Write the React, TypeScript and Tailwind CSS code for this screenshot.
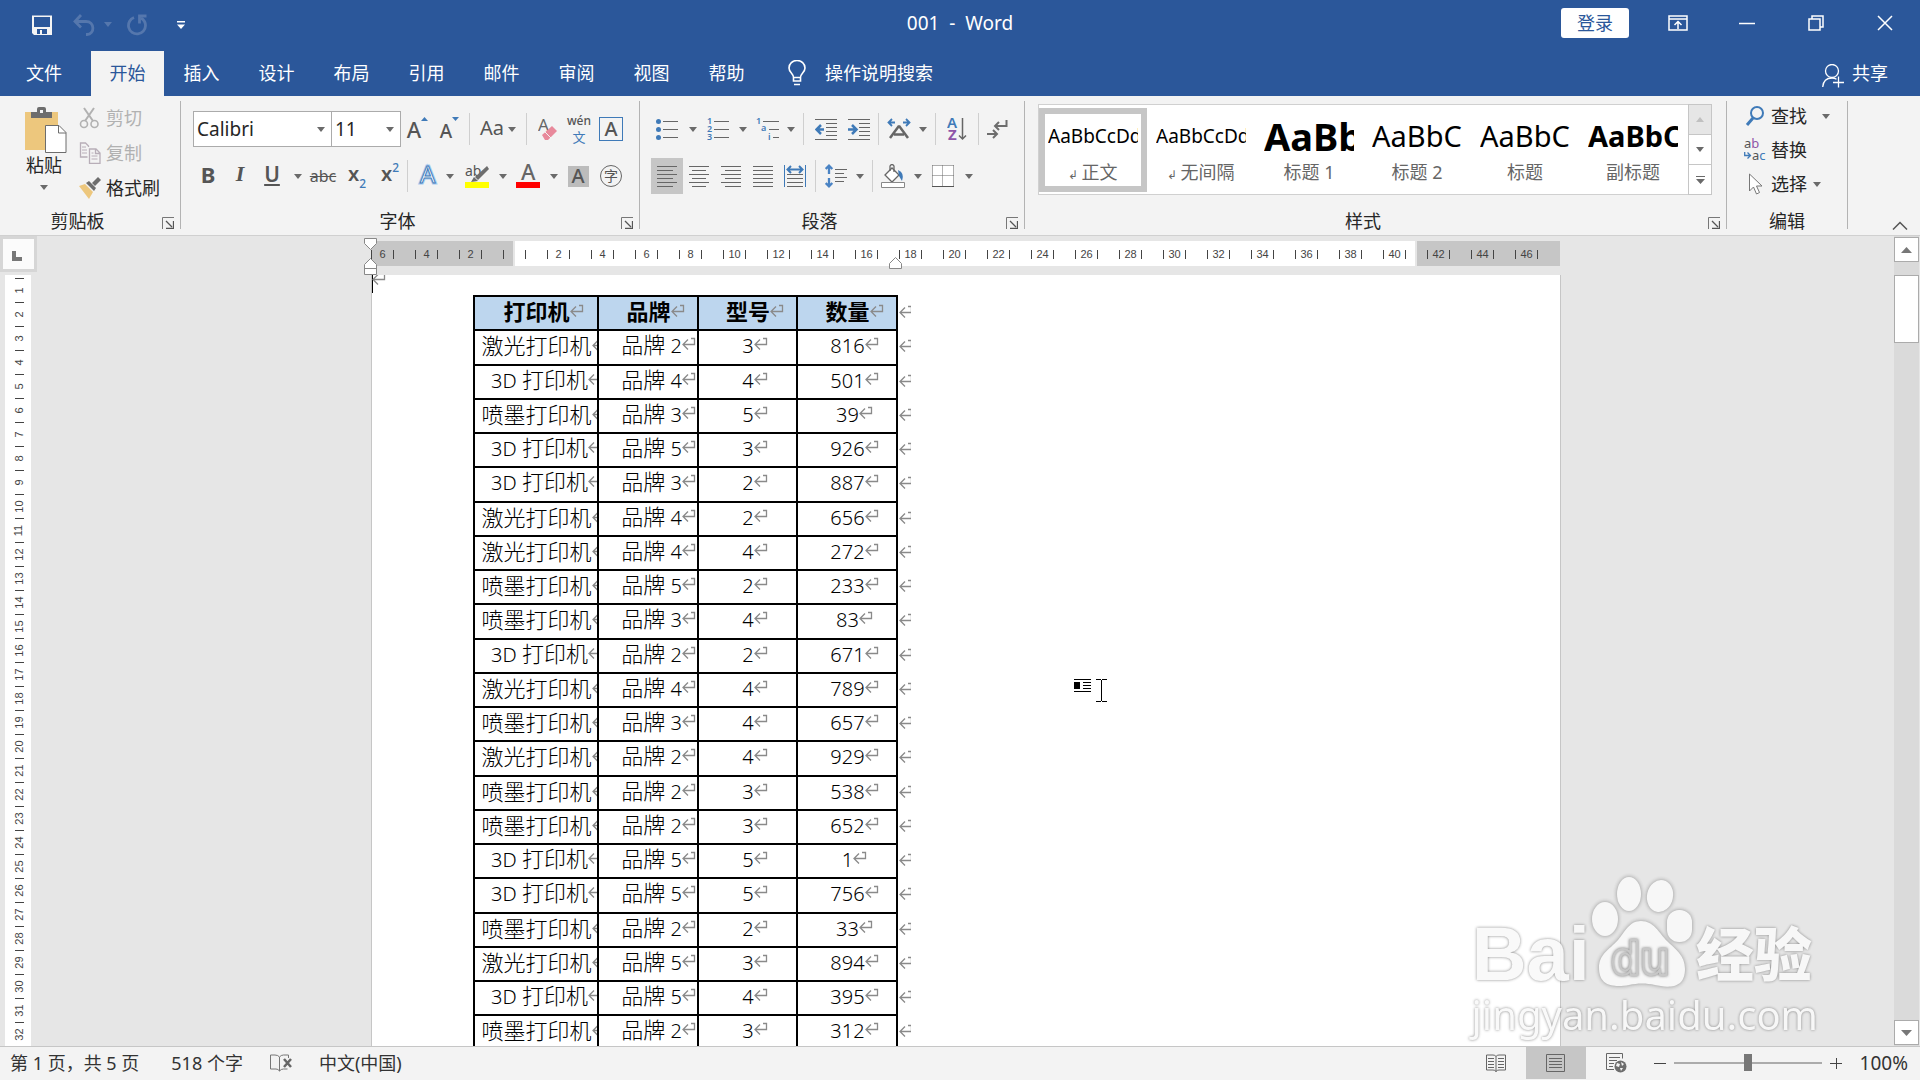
import type { ReactNode } from 'react';

const printers: [string, string, string, string][] = [
  ['激光打印机', '品牌 2', '3', '816'],
  ['3D 打印机', '品牌 4', '4', '501'],
  ['喷墨打印机', '品牌 3', '5', '39'],
  ['3D 打印机', '品牌 5', '3', '926'],
  ['3D 打印机', '品牌 3', '2', '887'],
  ['激光打印机', '品牌 4', '2', '656'],
  ['激光打印机', '品牌 4', '4', '272'],
  ['喷墨打印机', '品牌 5', '2', '233'],
  ['喷墨打印机', '品牌 3', '4', '83'],
  ['3D 打印机', '品牌 2', '2', '671'],
  ['激光打印机', '品牌 4', '4', '789'],
  ['喷墨打印机', '品牌 3', '4', '657'],
  ['激光打印机', '品牌 2', '4', '929'],
  ['喷墨打印机', '品牌 2', '3', '538'],
  ['喷墨打印机', '品牌 2', '3', '652'],
  ['3D 打印机', '品牌 5', '5', '1'],
  ['3D 打印机', '品牌 5', '5', '756'],
  ['喷墨打印机', '品牌 2', '2', '33'],
  ['激光打印机', '品牌 5', '3', '894'],
  ['3D 打印机', '品牌 5', '4', '395'],
  ['喷墨打印机', '品牌 2', '3', '312'],
];

const tabs = ['插入', '设计', '布局', '引用', '邮件', '审阅', '视图', '帮助'];

const styleItems = [
  { name: '正文', mark: true, sample: 'AaBbCcDd', font: 'text-[19px]', active: true },
  { name: '无间隔', mark: true, sample: 'AaBbCcDd', font: 'text-[19px]', active: false },
  { name: '标题 1', mark: false, sample: 'AaBb', font: 'text-[38px] font-bold', active: false },
  { name: '标题 2', mark: false, sample: 'AaBbC', font: 'text-[29px]', active: false },
  { name: '标题', mark: false, sample: 'AaBbC', font: 'text-[29px]', active: false },
  { name: '副标题', mark: false, sample: 'AaBbC', font: 'text-[29px] font-bold', active: false },
];

const rulerCells = Array.from({ length: 54 }, (_, i) => i - 6);
const sideCells = Array.from({ length: 32 }, (_, i) => i + 1);

function Icon({ w, h, children }: { w: number; h: number; children: ReactNode }) {
  return (
    <svg width={w} height={h} viewBox={`0 0 ${w} ${h}`} fill="none" className="shrink-0" aria-hidden="true">
      {children}
    </svg>
  );
}

function Caret() {
  return (
    <Icon w={8} h={5}>
      <path d="M0 0h8L4 5z" fill="#6a6a6a" />
    </Icon>
  );
}

function Tool({ label, className, children }: { label: string; className: string; children: ReactNode }) {
  return (
    <button aria-label={label} className={`flex h-9 shrink-0 items-center justify-center text-[#555] ${className}`}>
      {children}
    </button>
  );
}

function Sep() {
  return <div className="mx-1 h-8 w-px shrink-0 bg-[#cfcfcf]" />;
}

function Group({ title, className, launcher = true, children }: { title: string; className: string; launcher?: boolean; children: ReactNode }) {
  return (
    <>
      <section aria-label={title} className={`flex flex-col ${className}`}>
        {children}
        <div className="mt-auto flex h-7 items-center text-[#262626]">
          <span className="flex-1 text-center leading-7">{title}</span>
          {launcher && (
            <button aria-label={`${title}设置`} className="flex h-7 w-[25px] items-center justify-center pt-1">
              <Icon w={12} h={12}>
                <path d="M.5 12V.5H12" stroke="#777" />
                <path d="M4 4l6 6M11.500 4v7.500H4" stroke="#555" strokeWidth="1.300" />
              </Icon>
            </button>
          )}
        </div>
      </section>
      <div className="mt-[5px] mb-1.5 w-px shrink-0 bg-[#b3b3b3]" />
    </>
  );
}

function Lines({ rows }: { rows: [number, number][] }) {
  return (
    <Icon w={20} h={22}>
      {rows.map(([x, len], i) => (
        <path key={i} d={`M${x} ${i * 4 + 1.5}h${len}`} stroke="#666" />
      ))}
      <path d={`M${rows[1][0]} 21.500h${rows[1][1]}`} stroke="#666" />
    </Icon>
  );
}

function TitleBar() {
  return (
    <header className="grid h-[51px] shrink-0 grid-cols-[1fr_auto_1fr] bg-[#2b579a] text-white">
      <div className="flex items-center pb-0.5 pl-7">
        <button aria-label="保存" className="flex w-7 justify-center">
          <Icon w={20} h={20}>
            <path d="M0 .5h20V20H2L0 18z" fill="#f4f4f4" />
            <path d="M2 2h16v10H2zM5 14h10v5H5z" fill="#2b579a" />
            <path d="M8 15h2v4H8z" fill="#f4f4f4" />
          </Icon>
        </button>
        <button aria-label="撤消" className="ml-2.5 flex w-9 justify-center">
          <Icon w={22} h={22}>
            <path d="M8 1L2 7.500l6 6M2 7.500h11c9 0 9 13 1 13h-1" stroke="#5577ad" strokeWidth="2.800" />
          </Icon>
        </button>
        <button aria-label="撤消选项" className="flex w-3 justify-center">
          <Icon w={8} h={5}><path d="M0 0h8L4 5z" fill="#5577ad" /></Icon>
        </button>
        <button aria-label="重复" className="flex w-[46px] justify-center">
          <Icon w={20} h={22}>
            <path d="M7 3.500A8.500 8.500 0 1 0 18.500 11.500c0-3-1.500-5.500-4.500-7.500" stroke="#5577ad" strokeWidth="2.800" />
            <path d="M12.500 9.500V2h7" stroke="#5577ad" strokeWidth="2.800" />
          </Icon>
        </button>
        <button aria-label="自定义快速访问工具栏" className="flex w-[42px] justify-center">
          <Icon w={8} h={8}><path d="M0 0h8v1.500H0zM0 3.500h8L4 8z" fill="#fff" /></Icon>
        </button>
      </div>
      <h1 className="self-center pb-1.5 text-[19px] whitespace-pre">001  -  Word</h1>
      <div className="flex items-center justify-end pr-px pb-[5px]">
        <button className="mr-[14px] h-[30px] w-[68px] rounded-[3px] bg-white text-[#2b579a]">登录</button>
        <button aria-label="功能区显示选项" className="flex w-[69px] justify-center">
          <Icon w={20} h={16}>
            <path d="M1 1h18v14H1zM1 4h18" stroke="#fff" strokeWidth="1.500" />
            <path d="M10 14V7M6.500 10L10 6.500l3.500 3.500" stroke="#fff" strokeWidth="1.500" />
          </Icon>
        </button>
        <button aria-label="最小化" className="flex w-[69px] justify-center">
          <Icon w={16} h={16}><path d="M0 8.500h16" stroke="#fff" strokeWidth="1.500" /></Icon>
        </button>
        <button aria-label="还原" className="flex w-[69px] justify-center">
          <Icon w={16} h={16}>
            <path d="M1 4h11v11H1zM4 4V1h11v11h-3" stroke="#fff" strokeWidth="1.500" />
          </Icon>
        </button>
        <button aria-label="关闭" className="flex w-[69px] justify-center">
          <Icon w={16} h={16}><path d="M1 1l14 14M15 1L1 15" stroke="#fff" strokeWidth="1.500" /></Icon>
        </button>
      </div>
    </header>
  );
}

function TabBar() {
  return (
    <nav className="flex h-[45px] shrink-0 items-stretch bg-[#2b579a] text-white">
      <button className="w-[91px] pr-[3px] pb-0.5">文件</button>
      <button className="w-[73px] bg-[#f3f3f3] pb-0.5 text-[#2b579a]">开始</button>
      {tabs.map((tab) => (
        <button key={tab} className="w-[75px] pb-0.5">{tab}</button>
      ))}
      <button className="ml-6 flex items-center gap-[19px] pb-0.5">
        <Icon w={18} h={26}>
          <path d="M5.500 17.500c0-4-4.500-5-4.500-9.500a8 7.500 0 0 1 16 0c0 4.500-4.500 5.500-4.500 9.500zM5.500 18v3h7v-3M6 24.500h6" stroke="#fff" strokeWidth="1.600" />
        </Icon>
        操作说明搜索
      </button>
      <button className="mr-8 ml-auto flex items-center gap-2 pb-0.5">
        <span className="pt-1.5">
          <Icon w={22} h={24}>
            <ellipse cx="10" cy="7" rx="6.500" ry="6.500" stroke="#fff" strokeWidth="1.300" />
            <path d="M.7 23c.5-6 4-9 9.300-9 2 0 3.500.5 4.500 1.200M16.500 12.500v11M11 18.500h11" stroke="#fff" strokeWidth="1.300" />
          </Icon>
        </span>
        共享
      </button>
    </nav>
  );
}

function ClipboardGroup() {
  return (
    <Group title="剪贴板" className="w-[180px] shrink-0">
      <div className="flex">
        <button className="mt-[11px] ml-[21px] flex w-12 flex-col items-center pr-0.5 text-[#262626]">
          <span className="pl-1">
            <Icon w={42} h={46}>
              <path d="M0 5h33v38H0z" fill="#edc77d" />
              <path d="M6 5h6V2q0-2 2-2h5q2 0 2 2v3h6v6H6z" fill="#6d6d6d" />
              <path d="M15 3h3v3h-3z" fill="#f3f3f3" />
              <path d="M20.500 18.500H34l7 7v20H20.500z" fill="#fff" stroke="#6d6d6d" />
              <path d="M33.500 18.500v7.500H41" stroke="#6d6d6d" />
            </Icon>
          </span>
          <span className="leading-6">粘贴</span>
          <span className="mt-2"><Caret /></span>
        </button>
        <div className="flex flex-col pt-1 pl-2.5">
          <button disabled className="flex h-[35px] items-center gap-[5px] text-[#b1b1b1]">
            <Icon w={22} h={22}>
              <path d="M5 1l9 13M15 1L6 14" stroke="#b1b1b1" strokeWidth="2" />
              <circle cx="5" cy="17" r="3.500" stroke="#b1b1b1" strokeWidth="1.600" />
              <circle cx="15.500" cy="17" r="3.500" stroke="#b1b1b1" strokeWidth="1.600" />
            </Icon>
            剪切
          </button>
          <button disabled className="flex h-[35px] items-center gap-[5px] text-[#b1b1b1]">
            <Icon w={22} h={22}>
              <path d="M9.500 5V4l-3-3H1.500v14h7" stroke="#b8aeb8" strokeWidth="1.300" />
              <path d="M10.500 7H17l4 4v10.500H10.500zM16.500 7v4.500H21" stroke="#b8aeb8" strokeWidth="1.300" />
              <path d="M3 5h4M3 8h5M3 11h5M12.500 14h6M12.500 17h6M12.500 11h2" stroke="#b8aeb8" />
            </Icon>
            复制
          </button>
          <button className="flex h-[35px] items-center gap-[5px] text-[#262626]">
            <Icon w={22} h={22}>
              <path d="M0 9l6-2 8 8-4 7z" fill="#edc77d" />
              <path d="M7 6l3-2 7 7-2 3z" fill="#6d6d6d" />
              <path d="M13 6l6-6 3 3-6 6z" fill="#6d6d6d" />
            </Icon>
            格式刷
          </button>
        </div>
      </div>
    </Group>
  );
}

function FontGroup() {
  return (
    <Group title="字体" className="w-[458px] shrink-0 pt-[15px]">
      <div className="flex h-9 items-center pl-3">
        <label className="flex h-9 w-[139px] items-center border border-[#ababab] bg-white pr-1.5">
          <select aria-label="字体" className="w-full appearance-none pl-[3px] text-[19px] leading-8 text-[#262626] outline-none">
            <option>Calibri</option>
          </select>
          <Caret />
        </label>
        <label className="flex h-9 w-[69px] items-center border border-l-0 border-[#ababab] bg-white pr-1.5">
          <select aria-label="字号" className="w-full appearance-none pl-[3px] text-[19px] leading-8 text-[#262626] outline-none">
            <option>11</option>
          </select>
          <Caret />
        </label>
        <Tool label="增大字号" className="w-8 pl-px">
          <span className="text-[22px] leading-9 font-medium">A</span>
          <span className="mb-5"><Icon w={7} h={4}><path d="M0 4h7L3.500 0z" fill="#3f7ab8" /></Icon></span>
        </Tool>
        <Tool label="减小字号" className="w-8 pl-px">
          <span className="pt-1 text-[19px] leading-8 font-medium">A</span>
          <span className="mb-5"><Icon w={7} h={4}><path d="M0 0h7L3.500 4z" fill="#3f7ab8" /></Icon></span>
        </Tool>
        <Sep />
        <Tool label="更改大小写" className="w-12 gap-1"><span className="pb-0.5 text-xl leading-8">Aa</span><Caret /></Tool>
        <Sep />
        <Tool label="清除所有格式" className="w-[34px]">
          <Icon w={20} h={24}>
            <text x="0" y="14" fontSize="17" fill="#666">A</text>
            <path d="M4 18l10-9 5 5-9 9H7z" fill="#e8899b" />
            <path d="M7 15l6 6" stroke="#f3f3f3" />
          </Icon>
        </Tool>
        <Tool label="拼音指南" className="w-7 flex-col">
          <span className="text-xs leading-4 font-medium">wén</span>
          <span className="text-[13px] leading-4 text-[#3f7ab8]">文</span>
        </Tool>
        <Tool label="字符边框" className="w-9">
          <span className="flex size-6 items-center justify-center border border-[#3f7ab8] text-xl leading-6 font-medium">A</span>
        </Tool>
      </div>
      <div className="mt-[11px] flex h-9 items-center pl-3">
        <Tool label="加粗" className="w-[30px] pb-1 text-[22px] font-bold">B</Tool>
        <Tool label="倾斜" className="w-[34px] pb-1 font-['Liberation_Serif',serif] text-[22px] font-bold italic">I</Tool>
        <Tool label="下划线" className="w-[30px] pb-1 text-[21px] font-semibold underline underline-offset-2">U</Tool>
        <Tool label="下划线选项" className="w-[22px]"><Caret /></Tool>
        <Tool label="删除线" className="w-7 text-base line-through">abc</Tool>
        <Tool label="下标" className="w-10 text-xl font-semibold">
          <span className="pb-1">x</span><span className="mt-4 text-xs font-medium text-[#3f7ab8]">2</span>
        </Tool>
        <Tool label="上标" className="w-[26px] text-xl font-semibold">
          <span className="pb-1">x</span><span className="mb-4 text-xs font-medium text-[#3f7ab8]">2</span>
        </Tool>
        <Sep />
        <Tool label="文本效果和版式" className="w-8">
          <Icon w={24} h={28}>
            <text x="4" y="21" fontSize="24" fill="#fff" stroke="#a9cbef" strokeWidth="3">A</text>
            <text x="4" y="21" fontSize="24" fill="#fff" stroke="#3f7ab8" strokeWidth="1">A</text>
          </Icon>
        </Tool>
        <Tool label="文本效果选项" className="w-3"><Caret /></Tool>
        <Tool label="突出显示" className="w-[42px]">
          <Icon w={24} h={24}>
            <text x="0" y="12" fontSize="14" fill="#555">ab</text>
            <path d="M22 2l2 3-11 11-3-3z" fill="#6d6d6d" />
            <path d="M9 13l4 4-7 1z" fill="#6d6d6d" />
            <path d="M0 18h24v6H0z" fill="#ff0" />
          </Icon>
        </Tool>
        <Tool label="突出显示颜色" className="w-2.5"><Caret /></Tool>
        <Tool label="字体颜色" className="w-10">
          <Icon w={24} h={28}>
            <text x="5" y="18" fontSize="22" fontWeight="500" fill="#666">A</text>
            <path d="M0 20h24v6H0z" fill="red" />
          </Icon>
        </Tool>
        <Tool label="字体颜色选项" className="w-3"><Caret /></Tool>
        <Tool label="字符底纹" className="w-9">
          <span className="flex size-[21px] items-center justify-center bg-[#bcbcbc] text-xl leading-5 font-medium">A</span>
        </Tool>
        <Tool label="带圈字符" className="w-[30px]">
          <span className="flex size-[22px] items-center justify-center rounded-full border border-[#666] text-sm leading-4">字</span>
        </Tool>
      </div>
    </Group>
  );
}

function ParagraphGroup() {
  return (
    <Group title="段落" className="w-[384px] shrink-0 pt-[15px]">
      <div className="flex h-9 items-center pl-[9px]">
        <Tool label="项目符号" className="w-9">
          <Icon w={22} h={22}>
            <path d="M7 3.500h15M7 11.500h15M7 19.500h15" stroke="#666" />
            <circle cx="2.500" cy="3.500" r="2.500" fill="#3f7ab8" />
            <circle cx="2.500" cy="11.500" r="2.500" fill="#3f7ab8" />
            <circle cx="2.500" cy="19.500" r="2.500" fill="#3f7ab8" />
          </Icon>
        </Tool>
        <Tool label="项目符号选项" className="w-4"><Caret /></Tool>
        <Tool label="编号" className="w-[34px]">
          <Icon w={22} h={24}>
            <path d="M7 4.500h15M7 12.500h15M7 20.500h15" stroke="#666" />
            <text fontSize="9" fontWeight="600" fill="#3f7ab8">
              <tspan x="0" y="7">1</tspan>
              <tspan x="0" y="15">2</tspan>
              <tspan x="0" y="23">3</tspan>
            </text>
          </Icon>
        </Tool>
        <Tool label="编号选项" className="w-4"><Caret /></Tool>
        <Tool label="多级列表" className="w-8">
          <Icon w={23} h={24}>
            <path d="M7 4.500h16M13 12.500h10M17 20.500h6" stroke="#666" />
            <text fontSize="9" fontWeight="600" fill="#3f7ab8">
              <tspan x="0" y="7">1</tspan>
              <tspan x="5" y="14">a</tspan>
              <tspan x="12" y="23">i</tspan>
            </text>
          </Icon>
        </Tool>
        <Tool label="多级列表选项" className="w-4"><Caret /></Tool>
        <Sep />
        <Tool label="减少缩进量" className="w-9">
          <Icon w={22} h={22}>
            <path d="M0 1.500h22M11 5.500h11M11 9.500h11M11 13.500h11M11 17.500h11M0 21.500h22" stroke="#666" />
            <path d="M9 11.500H2M6 7l-4.500 4.500L6 16" stroke="#3f7ab8" strokeWidth="2.500" />
          </Icon>
        </Tool>
        <Tool label="增加缩进量" className="w-[30px]">
          <Icon w={22} h={22}>
            <path d="M0 1.500h22M11 5.500h11M11 9.500h11M11 13.500h11M11 17.500h11M0 21.500h22" stroke="#666" />
            <path d="M0 11.500h7M4 7l4.500 4.500L4 16" stroke="#3f7ab8" strokeWidth="2.500" />
          </Icon>
        </Tool>
        <Sep />
        <Tool label="中文版式" className="w-8">
          <Icon w={24} h={22}>
            <path d="M8 4.500H2M5 1L1.500 4.500 5 8M16 4.500h6M19 1l3.500 3.500L19 8" stroke="#3f7ab8" strokeWidth="1.800" />
            <path d="M3 20L11.500 8.500h1L21 20M7 16.500h10" stroke="#666" strokeWidth="2.500" />
          </Icon>
        </Tool>
        <Tool label="中文版式选项" className="w-4"><Caret /></Tool>
        <Sep />
        <Tool label="排序" className="w-[34px]">
          <Icon w={20} h={26}>
            <text x="0" y="12" fontSize="15" fontWeight="600" fill="#3f7ab8">A</text>
            <text x="1" y="24" fontSize="15" fontWeight="700" fill="#8e55a8">Z</text>
            <path d="M15.500 2v21M12 19.500l3.500 3.500 3.500-3.500" stroke="#666" strokeWidth="1.500" />
          </Icon>
        </Tool>
        <Sep />
        <Tool label="显示编辑标记" className="w-7">
          <Icon w={22} h={22}>
            <path d="M20.500 2v6H9M13 4L9 8l4 4" stroke="#6d6d6d" strokeWidth="2" />
            <path d="M1 16h10M7 12l4 4-4 4" stroke="#6d6d6d" strokeWidth="2" />
          </Icon>
        </Tool>
      </div>
      <div className="mt-[11px] flex h-9 items-center pl-[11px]">
        <Tool label="左对齐" className="w-8 bg-[#c6c6c6]"><Lines rows={[[0, 20], [0, 16], [0, 20], [0, 16], [0, 20]]} /></Tool>
        <Tool label="居中" className="w-8"><Lines rows={[[0, 20], [3, 14], [0, 20], [3, 14], [0, 20]]} /></Tool>
        <Tool label="右对齐" className="w-8"><Lines rows={[[0, 20], [4, 16], [0, 20], [4, 16], [0, 20]]} /></Tool>
        <Tool label="两端对齐" className="w-8"><Lines rows={[[0, 20], [0, 20], [0, 20], [0, 20], [0, 20]]} /></Tool>
        <Tool label="分散对齐" className="w-8">
          <Icon w={22} h={22}>
            <path d="M.5 0v22M21.500 0v22" stroke="#3f7ab8" />
            <path d="M4 4.500h14M7 1L3.500 4.500 7 8M15 1l3.500 3.500L15 8" stroke="#3f7ab8" strokeWidth="2" />
            <path d="M3 9.500h16M3 13.500h16M3 17.500h16M3 21.500h16" stroke="#666" />
          </Icon>
        </Tool>
        <Sep />
        <Tool label="行和段落间距" className="w-8">
          <Icon w={22} h={24}>
            <path d="M4 2v8M.7 5L4 1.700 7.300 5M4 14v8M.7 19L4 22.300 7.300 19" stroke="#4a83c4" strokeWidth="2.300" />
            <path d="M10 5.500h12M10 9.500h9M10 13.500h12M10 17.500h9" stroke="#666" />
          </Icon>
        </Tool>
        <Tool label="行距选项" className="w-4"><Caret /></Tool>
        <Sep />
        <Tool label="底纹" className="w-8">
          <Icon w={24} h={24}>
            <path d="M4 11l7-7 7 7-7 7z" fill="#fff" stroke="#666" strokeWidth="1.300" />
            <path d="M9 7V2q2-3 4 0v6" stroke="#666" strokeWidth="1.300" />
            <path d="M17 6q7 3 4 11l-3-5z" fill="#3f7ab8" />
            <path d="M.5 18.500h23v5H.5z" fill="#fff" stroke="#888" />
          </Icon>
        </Tool>
        <Tool label="底纹选项" className="w-[18px]"><Caret /></Tool>
        <Tool label="边框" className="w-8">
          <Icon w={22} h={22}>
            <path d="M1 1h20v20H1z" fill="#fff" />
            <path d="M.5 .5h21M.5 10.500h21M.5 .5v21M10.500 .5v21M21.500 .5v21" stroke="#666" strokeDasharray="1 1" />
            <path d="M0 21.500h22" stroke="#555" />
          </Icon>
        </Tool>
        <Tool label="边框选项" className="w-5"><Caret /></Tool>
      </div>
    </Group>
  );
}

function StylesGroup() {
  return (
    <Group title="样式" className="max-w-[701px] min-w-0 flex-1">
      <div className="mt-2 mr-[14px] ml-[13px] flex h-[91px]">
        <div className="flex min-w-0 flex-1 items-center overflow-hidden border border-r-0 border-[#d0d0d0] bg-white">
          {styleItems.map((item) => (
            <button
              key={item.name}
              className={`flex h-[84px] w-[108px] shrink-0 flex-col border-[6px] px-[3px] ${item.active ? 'border-[#c6c6c6]' : 'border-transparent'}`}
            >
              <span className={`flex h-11 w-full items-center overflow-hidden leading-[44px] text-black ${item.font}`}>{item.sample}</span>
              <span className="w-full text-center leading-7 whitespace-nowrap text-[#666]">
                {item.mark && <span className="text-xs">↲ </span>}
                {item.name}
              </span>
            </button>
          ))}
        </div>
        <div className="flex w-6 flex-col divide-y divide-[#c6c6c6] border border-[#c6c6c6] bg-white">
          <button aria-label="上一行" disabled className="flex flex-1 items-center justify-center bg-[#e6e6e6]">
            <Icon w={8} h={5}><path d="M0 5h8L4 0z" fill="#c0c0c0" /></Icon>
          </button>
          <button aria-label="下一行" className="flex flex-1 items-center justify-center">
            <Icon w={8} h={5}><path d="M0 0h8L4 5z" fill="#6a6a6a" /></Icon>
          </button>
          <button aria-label="其他样式" className="flex flex-1 items-center justify-center">
            <Icon w={9} h={8}><path d="M0 0h9v1H0zM0 3h9L4.500 8z" fill="#6a6a6a" /></Icon>
          </button>
        </div>
      </div>
    </Group>
  );
}

function EditingGroup() {
  return (
    <Group title="编辑" className="w-[120px] shrink-0" launcher={false}>
      <div className="flex flex-col pt-[3px] pl-[17px] text-[#262626]">
        <button className="flex h-[34px] items-center gap-[5px]">
          <Icon w={22} h={22}>
            <circle cx="13" cy="8" r="6" stroke="#3f7ab8" strokeWidth="2" />
            <path d="M9 13l-6 7" stroke="#3f7ab8" strokeWidth="3" />
          </Icon>
          查找
          <span className="ml-2.5"><Caret /></span>
        </button>
        <button className="flex h-[34px] items-center gap-[5px]">
          <Icon w={22} h={24}>
            <text x="0" y="10" fontSize="13" fill="#555">a<tspan fill="#8e55a8">b</tspan></text>
            <text x="8" y="22" fontSize="13" fill="#555">a<tspan fill="#3f7ab8">c</tspan></text>
            <path d="M.7 14v3.500H6M3.500 14.500l3 3-3 3" stroke="#3f7ab8" strokeWidth="1.300" />
          </Icon>
          替换
        </button>
        <button className="flex h-[34px] items-center gap-[5px]">
          <Icon w={22} h={22}>
            <path d="M5.500 1v17l4-4 3 7 3-1.500-3-6.500h5.500z" fill="#fff" stroke="#777" />
          </Icon>
          选择
          <span className="ml-px"><Caret /></span>
        </button>
      </div>
    </Group>
  );
}

function Ribbon() {
  return (
    <div className="flex h-[140px] shrink-0 border-b border-[#d0d0d0] bg-[#f3f3f3]">
      <ClipboardGroup />
      <FontGroup />
      <ParagraphGroup />
      <StylesGroup />
      <EditingGroup />
      <button aria-label="折叠功能区" className="mr-2.5 ml-auto flex size-5 items-center justify-center self-end">
        <Icon w={16} h={9}><path d="M1 8.500L8 1.500l7 7" stroke="#555" strokeWidth="1.500" /></Icon>
      </button>
    </div>
  );
}

function ReturnMark() {
  return (
    <Icon w={14} h={13}>
      <path d="M9 1.500h3.500v6H1.500M6 2.500l-5 5 5 5" stroke="#8a8a8a" strokeWidth="1.300" />
    </Icon>
  );
}

function CellText({ text }: { text: string }) {
  const mixed = text.includes(' ');
  return (
    <div className={`flex h-7 items-center justify-center overflow-hidden pb-[5px] ${mixed ? 'pl-2' : 'pl-0.5'}`}>
      <span className="relative leading-7 whitespace-pre">
        {text.split(/([0-9A-Z ]+)/).map((part, i) => (
          <span key={i} className={i % 2 ? 'text-xl' : ''}>{part}</span>
        ))}
        <span className="absolute top-[7px] left-full"><ReturnMark /></span>
      </span>
    </div>
  );
}

function RowEnd() {
  return (
    <td className="p-0 pb-1 pl-px">
      <div className="w-3 overflow-hidden"><ReturnMark /></div>
    </td>
  );
}

function DataTable() {
  return (
    <table className="mt-5 ml-[101px] w-[437px] table-fixed border-collapse text-[22px] font-light text-black">
      <colgroup>
        <col className="w-[124px]" />
        <col className="w-[100px]" />
        <col className="w-[99px]" />
        <col className="w-[100px]" />
        <col className="w-[14px]" />
      </colgroup>
      <thead>
        <tr className="h-[34px]">
          {['打印机', '品牌', '型号', '数量'].map((name) => (
            <th key={name} scope="col" className="border-2 border-black bg-[#bdd6ee] p-0 font-bold"><CellText text={name} /></th>
          ))}
          <RowEnd />
        </tr>
      </thead>
      <tbody>
        {printers.map((row, i) => (
          <tr key={i} className={i % 4 === 0 ? 'h-[35px]' : 'h-[34px]'}>
            {row.map((value, j) => (
              <td key={j} className="border-2 border-black p-0"><CellText text={value} /></td>
            ))}
            <RowEnd />
          </tr>
        ))}
      </tbody>
    </table>
  );
}

function Workspace() {
  return (
    <div className="flex min-h-0 flex-1 bg-[#e6e6e6]">
      <div className="flex w-[37px] shrink-0 flex-col overflow-hidden">
        <button aria-label="制表符" className="mb-[3px] flex h-9 shrink-0 items-center justify-center border-[3px] border-[#d6d6d6] bg-[#fbfbfb]">
          <span className="pt-1 pr-1"><Icon w={10} h={10}><path d="M0 0h4v6h6v4H0z" fill="#777" /></Icon></span>
        </button>
        <div className="ml-[5px] w-[26px] flex-1 bg-white pt-[3px]">
          {sideCells.map((n) => (
            <div key={n} className="flex h-6 flex-col items-center pl-0.5 font-['Liberation_Sans',sans-serif] text-[11px] text-[#444]">
              <span className="h-px w-[9px] bg-[#444]" />
              <span className="flex flex-1 -rotate-90 items-center leading-none">{n}</span>
            </div>
          ))}
        </div>
      </div>

      <main className="flex min-w-0 flex-1 flex-col items-center overflow-hidden">
        <div className="relative mt-[5px] mb-[9px] flex h-[25px] w-[1189px] shrink-0 items-center bg-[linear-gradient(to_right,#c6c6c6_142px,#e6e6e6_142px,#e6e6e6_144px,#fff_144px,#fff_1044px,#e6e6e6_1044px,#e6e6e6_1046px,#c6c6c6_1046px)]">
          {rulerCells.map((n) => (
            <div key={n} className="flex w-[22px] items-center pt-px font-['Liberation_Sans',sans-serif] text-[11px] leading-3 text-[#444]">
              <span className="h-[9px] w-px bg-[#444]" />
              <span className="flex-1 text-center">{n % 2 === 0 && n !== 0 ? Math.abs(n) : ''}</span>
            </div>
          ))}
          <div className="absolute top-[-3px] left-[-7px]">
            <Icon w={13} h={37}>
              <path d="M.5 .5h12v5l-6 6-6-6z" fill="#fff" stroke="#888" />
              <path d="M.5 36.500h12v-10l-6-6-6 6zM.5 30.500h12" fill="#fff" stroke="#888" />
            </Icon>
          </div>
          <div className="absolute top-4 left-[518px]">
            <Icon w={13} h={12}><path d="M.5 11.500h12v-5l-6-6-6 6z" fill="#fff" stroke="#888" /></Icon>
          </div>
        </div>
        <div className="relative w-[1190px] flex-1 overflow-hidden border-x border-[#c6c6c6] bg-white">
          <DataTable />
          <div className="absolute -top-[3px] left-0 flex">
            <span className="h-[21px] w-px bg-black" />
            <span className="-ml-px"><ReturnMark /></span>
          </div>
          {/* mouse pointer with the click-and-type hint */}
          <div className="absolute top-[404px] left-[702px]">
            <Icon w={34} h={24}>
              <path d="M0 .5h17M0 12.500h17M9 3.500h8M9 6.500h8M9 9.500h8" stroke="#000" />
              <path d="M0 3h6v7H0z" fill="#000" />
              <path d="M22 .5h5M28 .5h5M27.500 1v21M22 22.500h5M28 22.500h5" stroke="#000" />
            </Icon>
          </div>
        </div>
      </main>

      <div className="mr-px flex w-[25px] shrink-0 flex-col bg-[#dadada] pt-px">
        <button aria-label="向上滚动" className="flex h-[25px] items-center justify-center border border-[#ababab] bg-white">
          <Icon w={11} h={6}><path d="M0 6h11L5.500 0z" fill="#777" /></Icon>
        </button>
        <div className="mt-[13px] h-[68px] border border-[#ababab] bg-white" />
        <button aria-label="向下滚动" className="mt-auto mb-px flex h-[25px] items-center justify-center border border-[#ababab] bg-white">
          <Icon w={11} h={6}><path d="M0 0h11L5.500 6z" fill="#777" /></Icon>
        </button>
      </div>
    </div>
  );
}

function StatusBar() {
  return (
    <footer className="flex h-[34px] shrink-0 items-center border-t border-[#c6c6c6] bg-[#f3f3f3] pr-3 pb-0.5 pl-2.5 text-[#333]">
      <span>第 1 页，共 5 页</span>
      <span className="ml-8">518 个字</span>
      <button aria-label="校对" className="mx-[27px]">
        <Icon w={22} h={18}>
          <path d="M9.500 17V3Q8 1 5 1H.5v14H6q2 0 3.500 2 1.500-2 4-2h4M9.500 3q1.500-2 4-2h5v3" stroke="#777" />
          <path d="M14 5l7 8M21 5l-7 8" stroke="#666" strokeWidth="2.500" />
        </Icon>
      </button>
      <span>中文(中国)</span>
      <div className="ml-auto flex items-center">
        <button aria-label="阅读视图" className="flex h-8 w-[60px] items-center justify-center">
          <Icon w={20} h={18}>
            <path d="M10 2.500Q9 1 7 1H.5v15H7q2 0 3 1.500Q11 16 13 16h6.500V1H13q-2 0-3 1.500zV18" stroke="#666" />
            <path d="M2 4.500h6M2 7.500h6M2 10.500h6M2 13.500h6M12 4.500h6M12 7.500h6M12 10.500h6M12 13.500h6" stroke="#666" />
          </Icon>
        </button>
        <button aria-label="页面视图" className="flex h-8 w-[60px] items-center justify-center bg-[#c6c6c6]">
          <Icon w={20} h={18}>
            <path d="M.5 .5h18v17H.5zM3 4.500h13M3 7.500h13M3 10.500h13M3 13.500h13" stroke="#666" />
          </Icon>
        </button>
        <button aria-label="Web 版式视图" className="flex h-8 w-[60px] items-center justify-center">
          <Icon w={21} h={20}>
            <path d="M8 16.500H.5V.5h16v5M3 4.500h11M3 7.500h8M3 10.500h5M3 13.500h4" stroke="#666" />
            <circle cx="14.500" cy="13.500" r="6" fill="#6d6d6d" />
            <path d="M11 10l3 1-1 3-3-1zM15 9l3 2-2 2zM14 15l3 0-2 3z" fill="#f3f3f3" />
          </Icon>
        </button>
        <button aria-label="缩小" className="mx-2">
          <Icon w={12} h={12}><path d="M0 6.500h12" stroke="#444" /></Icon>
        </button>
        <input
          type="range"
          aria-label="显示比例"
          defaultValue={50}
          className="h-[17px] w-[148px] appearance-none bg-transparent [&::-webkit-slider-runnable-track]:h-[17px] [&::-webkit-slider-runnable-track]:bg-[linear-gradient(#0000_8px,#ababab_8px,#ababab_10px,#0000_10px)] [&::-webkit-slider-thumb]:h-[17px] [&::-webkit-slider-thumb]:w-2 [&::-webkit-slider-thumb]:appearance-none [&::-webkit-slider-thumb]:bg-[#777]"
        />
        <button aria-label="放大" className="mr-4 ml-2">
          <Icon w={12} h={12}><path d="M0 6.500h12M6.500 1v11" stroke="#444" /></Icon>
        </button>
        <span className="w-[50px] text-right text-[19px]">100%</span>
      </div>
    </footer>
  );
}

function Watermark() {
  return (
    <div className="pointer-events-none absolute right-[102px] bottom-[38px] flex flex-col items-end text-[#f9f9f9] opacity-90 [text-shadow:0_0_3px_#777]">
      <div className="mr-1.5 flex items-end">
        <span className="font-['Liberation_Sans',sans-serif] text-[76px] leading-[76px] font-bold">Bai</span>
        <svg width="106" height="114" viewBox="0 0 106 114" className="mb-1 drop-shadow-[0_0_2px_#888]" fill="#f9f9f9" aria-hidden="true">
          <ellipse cx="15" cy="45" rx="13" ry="17" />
          <ellipse cx="39" cy="20" rx="12" ry="17" />
          <ellipse cx="70" cy="22" rx="13" ry="16" transform="rotate(12 70 22)" />
          <rect x="77" y="36" width="25" height="32" rx="12" />
          <path d="M51 47c13 0 18 12 26 20s18 14 18 28c0 22-20 18-30 16-9-2-17-2-26 0-12 2-30 3-30-17 0-14 10-18 19-28 7-8 11-19 23-19z" />
          <text x="21" y="101" fontSize="48" fontFamily="Liberation Sans" fontWeight="700" stroke="#c4c4c4" strokeWidth="2">du</text>
        </svg>
        <span className="text-[58px] leading-[76px] font-black">经验</span>
      </div>
      <span className="-mt-1 text-[40px] leading-[54px]">jingyan.baidu.com</span>
    </div>
  );
}

export default function App() {
  return (
    <div className="relative flex h-screen flex-col overflow-hidden font-['Noto_Sans','Noto_Sans_CJK_SC',sans-serif] text-lg leading-6">
      <TitleBar />
      <TabBar />
      <Ribbon />
      <Workspace />
      <StatusBar />
      <Watermark />
    </div>
  );
}
